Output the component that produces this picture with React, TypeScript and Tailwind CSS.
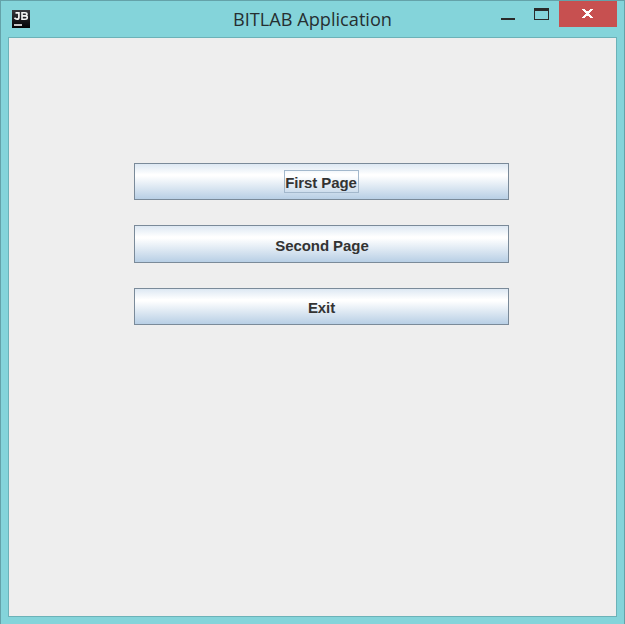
import React from "react";

function AppIcon() {
  return (
    <div className="mt-[9px] ml-[11px] h-[18px] w-[18px] shrink-0 bg-linear-to-b from-[#38383c] to-[#050507]">
      <svg width="18" height="18" viewBox="0 0 18 18" fill="none" className="block">
        <path d="M3.5 2.9H6.9V7.2Q6.9 9.2 5 9.2Q3.4 9.2 2.5 7.8" stroke="#f4f4f4" strokeWidth="1.7" />
        <path d="M10 2V10M9.2 2.8H13Q15 2.8 15 4.3Q15 5.9 13 5.9H10M13 5.9Q15.3 5.9 15.3 7.5Q15.3 9.2 13 9.2H9.2" stroke="#f4f4f4" strokeWidth="1.6" />
        <path d="M2 15H10" stroke="#c4c4c4" strokeWidth="2" />
      </svg>
    </div>
  );
}

function TitleBar() {
  return (
    <header className="flex h-[36px] items-start">
      <AppIcon />
      <h1 className="mt-[5px] flex-1">
        <svg width="400" height="28" className="block">
          <text x="203" y="20" fontSize="19" textLength="159" lengthAdjust="spacingAndGlyphs" fill="#262f31" fontFamily="'Open Sans', 'Noto Sans', sans-serif">
            BITLAB Application
          </text>
        </svg>
      </h1>
      <div className="flex items-start">
        <button aria-label="Minimize" className="mt-[17px] mr-[19px] h-[2px] w-[14px] bg-[#2a2a2a]" />
        <button aria-label="Maximize" className="mt-[7px] mr-[10px] h-[12px] w-[15px] border border-t-[3px] border-[#2a2a2a]" />
        <button aria-label="Close" className="mr-[7px] flex h-[26px] w-[58px] bg-[#c75050] pt-[8px] pl-[23px]">
          <svg width="11" height="9" viewBox="0 0 11 9" shapeRendering="crispEdges" fill="#ffffff">
            <path d="M0 0H3V1H4V2H7V1H8V0H11V1H10V2H9V3H8V4H7V5H8V6H9V7H10V8H11V9H8V8H7V7H4V8H3V9H0V8H1V7H2V6H3V5H4V4H3V3H2V2H1V1H0Z" />
          </svg>
        </button>
      </div>
    </header>
  );
}

type MenuButtonProps = { label: string; size: string; focused?: boolean };

function MenuButton({ label, size, focused = false }: MenuButtonProps) {
  return (
    <button
      className={`flex w-[375px] items-start justify-center border border-[#7a8a99] bg-[linear-gradient(180deg,#dde8f3_0%,#ffffff_30%,#ffffff_34%,#b8cfe5_100%)] text-[15px] leading-[21px] font-bold tracking-[-0.08px] text-[#333333] ${size}`}
    >
      <span className={`flex h-[23px] items-center justify-center border pt-[2px] ${focused ? "-ml-px w-[75px] border-[#a3b8cc]" : "border-transparent"}`}>
        {label}
      </span>
    </button>
  );
}

export default function App() {
  return (
    <div className="flex h-[624px] w-[625px] flex-col border-x border-t border-[#64a2a9] bg-[#84d4da] font-['Liberation_Sans',Arial,sans-serif]">
      <TitleBar />
      <main className="mx-[7px] flex h-[580px] flex-col items-center border border-[#6cb2b8] bg-[#eeeeee] pt-[125px] pl-[18px]">
        <MenuButton label="First Page" size="h-[37px] mb-[25px] pt-[6px]" focused />
        <MenuButton label="Second Page" size="h-[38px] mb-[25px] pt-[7px] pl-px" />
        <MenuButton label="Exit" size="h-[37px] pt-[6px]" />
      </main>
    </div>
  );
}
